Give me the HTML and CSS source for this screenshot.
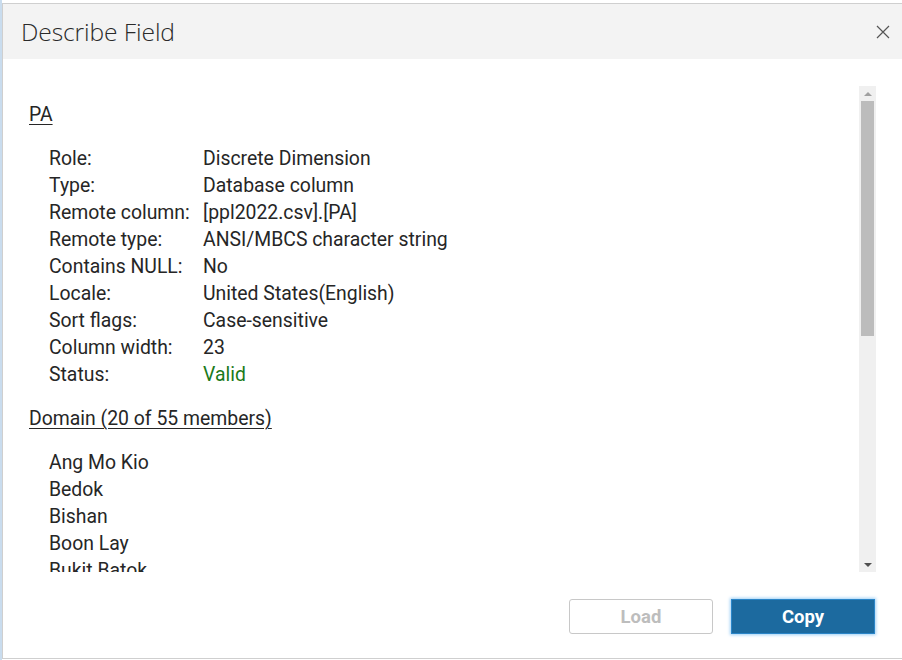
FILE: index.html
```html
<!DOCTYPE html>
<html>
<head>
<meta charset="utf-8">
<link rel="stylesheet" href="styles.css">
</head>
<body>
<div class="dialog">
  <div class="header">
    <div class="title">Describe Field</div>
    <div class="close">
      <svg width="14" height="14" viewBox="0 0 14 14"><path d="M1 1L13 13M13 1L1 13" stroke="#555" stroke-width="1.2" fill="none"/></svg>
    </div>
  </div>
  <div class="body">
    <div class="scrollbox">
      <div class="content">
        <div class="heading">PA</div>
        <div class="props">
          <div class="lbl">Role:</div><div class="val">Discrete Dimension</div>
          <div class="lbl">Type:</div><div class="val">Database column</div>
          <div class="lbl">Remote column:</div><div class="val">[ppl2022.csv].[PA]</div>
          <div class="lbl">Remote type:</div><div class="val">ANSI/MBCS character string</div>
          <div class="lbl">Contains NULL:</div><div class="val">No</div>
          <div class="lbl">Locale:</div><div class="val">United States(English)</div>
          <div class="lbl">Sort flags:</div><div class="val">Case-sensitive</div>
          <div class="lbl">Column width:</div><div class="val">23</div>
          <div class="lbl">Status:</div><div class="val valid">Valid</div>
        </div>
        <div class="heading domain">Domain (20 of 55 members)</div>
        <div class="members">
          <div>Ang Mo Kio</div>
          <div>Bedok</div>
          <div>Bishan</div>
          <div>Boon Lay</div>
          <div>Bukit Batok</div>
        </div>
      </div>
      <div class="scrollbar">
        <div class="arrow up"></div>
        <div class="thumb"></div>
        <div class="track"></div>
        <div class="arrow down"></div>
      </div>
    </div>
    <div class="footer">
      <button class="btn load">Load</button>
      <button class="btn copy">Copy</button>
    </div>
  </div>
</div>
</body>
</html>
```
FILE: styles.css
```css
html, body {
  margin: 0;
  padding: 0;
  background: #fff;
  width: 902px;
  height: 660px;
  overflow: hidden;
}
body {
  padding-top: 3px;
  padding-left: 2px;
  box-sizing: border-box;
  background: linear-gradient(to right, #c9dcee 0, #c9dcee 2px, #fff 2px);
}
.dialog {
  width: 910px;
  height: 656px;
  border: 1px solid #cfcfcf;
  box-sizing: border-box;
  background: #fff;
  font-family: "Roboto", "Liberation Sans", sans-serif;
  color: #333;
  display: flex;
  flex-direction: column;
}
.header {
  height: 55px;
  background: #f3f3f3;
  display: flex;
  align-items: center;
  padding-left: 18px;
  padding-right: 13px;
  flex: none;
  width: 900px;
  box-sizing: border-box;
}
.title {
  font-family: "Open Sans", sans-serif;
  font-weight: 300;
  font-size: 24.6px;
  color: #2a2a2a;
  flex: 1;
  letter-spacing: -0.1px;
  margin-top: -1px;
}
.close {
  width: 14px;
  height: 14px;
  display: flex;
}
.body {
  width: 899px;
  padding: 27px 0 0 26px;
  box-sizing: border-box;
  display: flex;
  flex-direction: column;
}
.scrollbox {
  height: 486px;
  display: flex;
  width: 847px;
}
.content {
  flex: 1;
  overflow: hidden;
  padding-top: 17px;
  font-family: "Roboto", sans-serif;
  font-size: 19.4px;
  color: #262626;
}
.heading {
  text-decoration: underline;
  text-underline-offset: 3px;
  text-decoration-thickness: 1px;
  line-height: 24px;
  margin-bottom: 18px;
}
.domain {
  margin-top: 19px;
  margin-bottom: 18px;
}
.props {
  display: grid;
  grid-template-columns: 154px 1fr;
  padding-left: 20px;
  line-height: 27px;
}
.valid {
  color: #1b7a1b;
}
.members {
  padding-left: 20px;
  line-height: 27px;
}
.scrollbar {
  width: 17px;
  background: #f0f0f0;
  display: flex;
  flex-direction: column;
  align-items: center;
  flex: none;
}
.arrow {
  width: 0;
  height: 0;
  border-left: 4px solid transparent;
  border-right: 4px solid transparent;
  margin: 6px 0 5px;
}
.arrow.up {
  border-bottom: 4px solid #a0a0a0;
}
.arrow.down {
  border-top: 4px solid #505050;
}
.thumb {
  width: 13px;
  height: 235px;
  background: #bcbcbc;
}
.track {
  flex: 1;
}
.footer {
  display: flex;
  justify-content: flex-end;
  gap: 18px;
  padding-top: 27px;
  width: 846px;
}
.btn {
  height: 35px;
  width: 144px;
  border-radius: 3px;
  font-family: "Roboto", sans-serif;
  font-weight: 700;
  font-size: 18.5px;
  padding: 0;
}
.load {
  background: #fff;
  border: 1px solid #c8c8c8;
  color: #bdbdbd;
}
.copy {
  background: #1c6a9f;
  border: 1px solid #2a85c8;
  color: #fff;
  border-radius: 0;
  box-shadow: 0 0 3px 1px #9fd0f5;
}
```
